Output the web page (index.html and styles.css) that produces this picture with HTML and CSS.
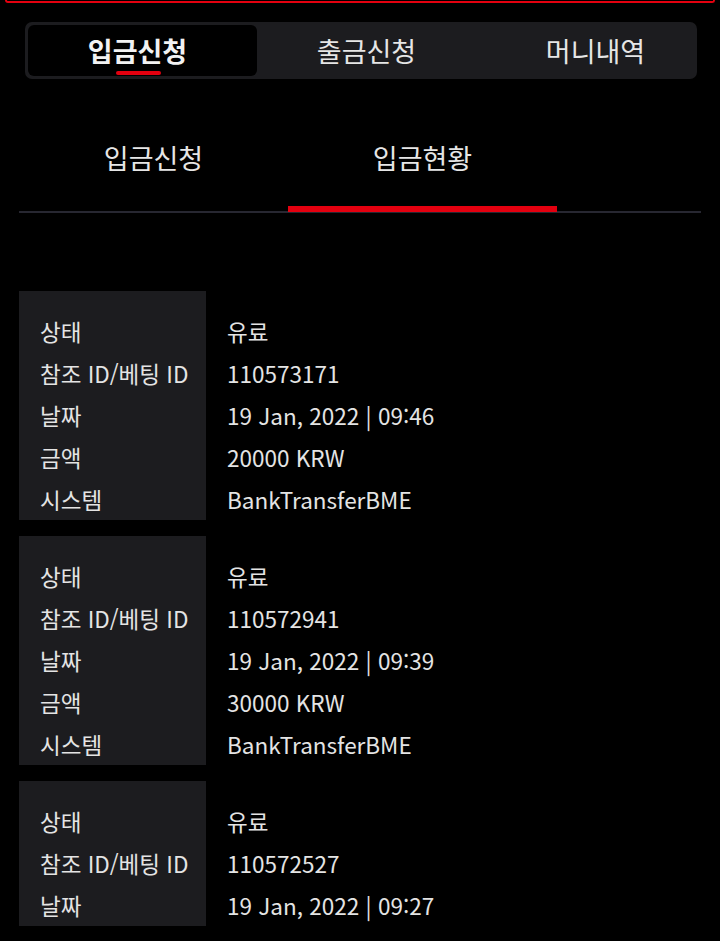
FILE: index.html
```html
<!DOCTYPE html>
<html lang="ko">
<head>
<meta charset="utf-8">
<link rel="stylesheet" href="styles.css">
</head>
<body>
<div class="top-strip"></div>
<nav class="main-tabs">
  <div class="main-tab active">입금신청</div>
  <div class="main-tab">출금신청</div>
  <div class="main-tab">머니내역</div>
</nav>
<div class="sub-tabs">
  <div class="sub-tab">입금신청</div>
  <div class="sub-tab active">입금현황</div>
</div>
<div class="list">
  <div class="card">
    <div class="label">상태</div><div class="value">유료</div>
    <div class="label">참조 ID/베팅 ID</div><div class="value">110573171</div>
    <div class="label">날짜</div><div class="value">19 Jan, 2022 | 09:46</div>
    <div class="label">금액</div><div class="value">20000 KRW</div>
    <div class="label">시스템</div><div class="value">BankTransferBME</div>
  </div>
  <div class="card">
    <div class="label">상태</div><div class="value">유료</div>
    <div class="label">참조 ID/베팅 ID</div><div class="value">110572941</div>
    <div class="label">날짜</div><div class="value">19 Jan, 2022 | 09:39</div>
    <div class="label">금액</div><div class="value">30000 KRW</div>
    <div class="label">시스템</div><div class="value">BankTransferBME</div>
  </div>
  <div class="card">
    <div class="label">상태</div><div class="value">유료</div>
    <div class="label">참조 ID/베팅 ID</div><div class="value">110572527</div>
    <div class="label">날짜</div><div class="value">19 Jan, 2022 | 09:27</div>
  </div>
</div>
</body>
</html>
```
FILE: styles.css
```css
* { box-sizing: border-box; }
html, body { height: 100%; }
body {
  margin: 0;
  background: #000;
  color: #e4e4e4;
  font-family: "Noto Sans CJK KR", "Noto Sans", sans-serif;
  overflow: hidden;
}
.top-strip {
  margin: 0 5px;
  height: 3px;
  border: 2px solid #e3000f;
  border-top: none;
  border-radius: 0 0 6px 6px;
}
.main-tabs {
  display: flex;
  margin: 19px 23px 0 25px;
  height: 57px;
  padding: 3px;
  background: #1c1c1f;
  border-radius: 7px;
}
.main-tab {
  flex: none;
  width: 229px;
  display: flex;
  align-items: center;
  justify-content: center;
  padding-right: 10px;
  font-size: 27px;
  color: #e6e6e6;
  position: relative;
  border-radius: 6px;
}
.main-tab.active {
  background: #000;
  font-weight: 700;
  color: #f2f2f2;
}
.main-tab.active::after {
  content: "";
  position: absolute;
  left: 88px;
  width: 45px;
  bottom: 1px;
  height: 4px;
  border-radius: 2px;
  background: #e3000f;
}
.sub-tabs {
  display: flex;
  margin: 0 19px;
  border-bottom: 2px solid #272731;
  height: 134px;
}
.sub-tab {
  width: 269px;
  text-align: center;
  font-size: 27px;
  line-height: 34px;
  padding-top: 62px;
  color: #e6e6e6;
}
.sub-tab.active {
  border-bottom: 6px solid #e3000f;
  margin-bottom: -1px;
}
.list {
  margin: 78px 19px 0;
  display: flex;
  flex-direction: column;
  gap: 16px;
}
.card {
  flex: none;
  display: grid;
  grid-template-columns: 187px 1fr;
  grid-auto-rows: 42px;
  padding-top: 19px;
  background: linear-gradient(to right, #1c1c1f 187px, transparent 187px);
}
.label, .value {
  display: flex;
  align-items: center;
  font-size: 22.5px;
  padding-left: 21px;
  white-space: nowrap;
}
```
